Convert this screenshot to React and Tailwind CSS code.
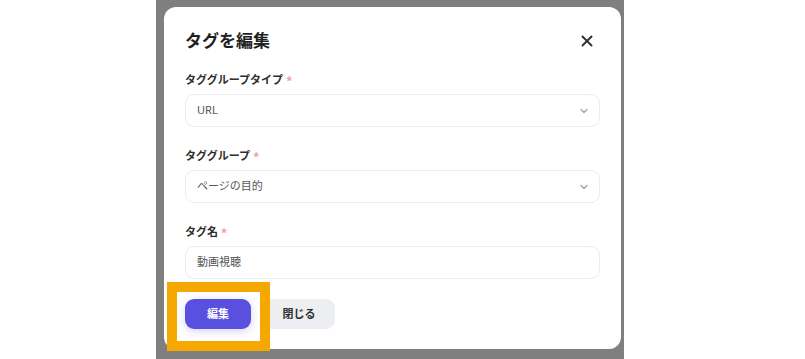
import React from "react";

const font = { fontFamily: '"Noto Sans", "Noto Sans CJK JP", sans-serif' };

function Chevron() {
  return (
    <svg width="12" height="12" viewBox="0 0 24 24" fill="none" stroke="#9ca3af" strokeWidth="2.5" strokeLinecap="round" strokeLinejoin="round">
      <path d="m6 9 6 6 6-6" />
    </svg>
  );
}

function Label({ children }) {
  return (
    <div className="h-[14px] flex items-center text-[11px] leading-[14px] font-bold text-[#2e2e2e]">
      <span>{children}</span>
      <span className="ml-[3px] text-[#f29aae]">*</span>
    </div>
  );
}

function Field({ value, select }) {
  return (
    <div className="mt-[7px] h-[33px] w-[415px] rounded-[9px] border border-[#ececec] bg-white flex items-center justify-between pl-[11px] pr-[9px]">
      <span className="text-[11px] text-[#555]">{value}</span>
      {select && <Chevron />}
    </div>
  );
}

export default function App() {
  return (
    <div className="relative w-[805px] h-[359px] bg-white flex overflow-hidden" style={font}>
      <div className="w-[156px] shrink-0 bg-white" />
      <div className="w-[468px] h-[359px] shrink-0 bg-[#7f7f7f] pl-[8px] pt-[7px]">
        <div className="w-[457px] h-[342px] rounded-[12px] bg-white pt-[22px] px-[21px] flex flex-col">
          <div className="flex items-center justify-between h-[24px]">
            <h1 className="text-[17px] leading-[24px] font-bold text-[#1f1f1f]">タグを編集</h1>
            <svg className="mr-[4px]" width="18" height="18" viewBox="0 0 24 24" fill="none" stroke="#333" strokeWidth="2.6" strokeLinecap="round" strokeLinejoin="round">
              <path d="M18 6 6 18" />
              <path d="m6 6 12 12" />
            </svg>
          </div>
          <div className="mt-[20px]">
            <Label>タググループタイプ</Label>
            <Field value="URL" select />
          </div>
          <div className="mt-[22px]">
            <Label>タググループ</Label>
            <Field value="ページの目的" select />
          </div>
          <div className="mt-[22px]">
            <Label>タグ名</Label>
            <Field value="動画視聴" />
          </div>
          <div className="mt-[20px] flex gap-[12px]">
            <button className="w-[66px] h-[30px] rounded-[9px] bg-[#5a50e0] text-white text-[11px] font-bold shadow-[0_2px_8px_rgba(90,80,224,0.25)]">
              編集
            </button>
            <button className="w-[72px] h-[30px] rounded-[9px] bg-[#eceef1] text-[#2e2e2e] text-[11px] font-bold">
              閉じる
            </button>
          </div>
        </div>
      </div>
      <div className="flex-1 bg-white" />
      <div className="absolute left-[167px] top-[282px] w-[103px] h-[69px] border-[10px] border-[#f5a800]" />
    </div>
  );
}
